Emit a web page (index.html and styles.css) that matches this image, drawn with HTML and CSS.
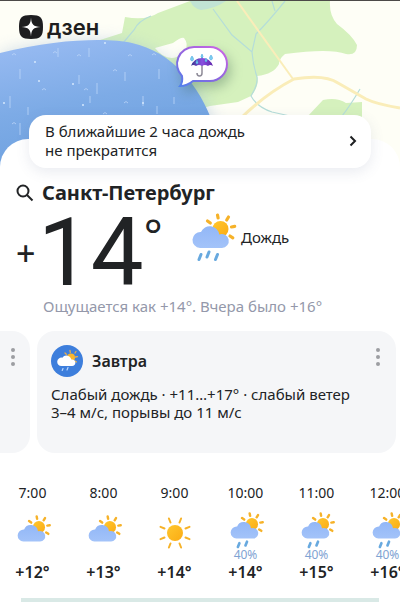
FILE: index.html
```html
<!DOCTYPE html>
<html lang="ru">
<head>
<meta charset="utf-8">
<meta name="viewport" content="width=device-width, initial-scale=1">
<title>Погода — Санкт-Петербург</title>
<link rel="stylesheet" href="styles.css">
</head>
<body>
<svg class="defs" aria-hidden="true">
  <defs>
    <linearGradient id="sunFill" x1="0" y1="0" x2="1" y2="1">
      <stop offset="0" stop-color="#ffc72e"/><stop offset="1" stop-color="#fbab13"/>
    </linearGradient>
    <linearGradient id="cloudFill" x1="0" y1="0" x2="0" y2="1">
      <stop offset="0" stop-color="#92b7f7"/><stop offset="1" stop-color="#a3c3f9"/>
    </linearGradient>
    <symbol id="sun-cloud" viewBox="0 0 46 50">
      <g stroke="#f6b229" stroke-width="3.200" stroke-linecap="round">
        <path d="M26.500 2l.6 3M37.500 4l-1.800 3M16.500 8l2.800 2M40.500 14l3.200-.6M39 23l2.800 1.800"/>
      </g>
      <circle cx="29.500" cy="16" r="8" fill="url(#sunFill)"/>
      <path d="M9 35a8 8 0 1 1 1-16a9.500 9.500 0 0 1 18.200 2.500a7 7 0 1 1 2.800 13.500z" fill="url(#cloudFill)"/>
    </symbol>
    <symbol id="rain-two" viewBox="0 0 46 50">
      <use href="#sun-cloud" width="46" height="50"/>
      <path d="M13 41l-2 5M23 39l-2 5" stroke="#68a9df" stroke-width="3.500" stroke-linecap="round"/>
    </symbol>
    <symbol id="rain-three" viewBox="0 0 46 50">
      <use href="#sun-cloud" width="46" height="50"/>
      <path d="M10 41.500l-2 5M18 39l-2 5M26.500 41.500l-2 5" stroke="#68a9df" stroke-width="3" stroke-linecap="round"/>
    </symbol>
    <symbol id="sun" viewBox="0 0 34 34">
      <circle cx="17" cy="17" r="8" fill="url(#sunFill)"/>
      <path d="M12.500 6.500l-1.600-4M21.500 6.500l1.600-4M27.500 12.500l4-1.600M27.500 21.500l4 1.600M21.500 27.500l1.600 4M12.500 27.500l-1.600 4M6.500 21.500l-4 1.600M6.500 12.500l-4-1.600" stroke="#f6b229" stroke-width="2" stroke-linecap="round"/>
    </symbol>
  </defs>
</svg>

<header class="hero">
  <svg class="map" viewBox="0 0 400 180" preserveAspectRatio="xMidYMin slice" aria-hidden="true">
    <defs>
      <linearGradient id="rainFill" x1="0" y1="0" x2=".3" y2="1">
        <stop offset="0" stop-color="#9abcf3"/><stop offset=".5" stop-color="#7dabe6"/><stop offset="1" stop-color="#6b9fde"/>
      </linearGradient>
      <filter id="soft" x="-20%" y="-20%" width="140%" height="140%"><feGaussianBlur stdDeviation="8"/></filter>
    </defs>
    <rect width="400" height="180" fill="#fefef6"/>
    <path d="M100 39L122 32L125 16Q146 20 158 12L190 0H330Q329 14 337 23Q352 34 357 44Q357 55 346 53Q330 47 285 53Q279 58 279 63Q274 73 257 75Q260 84 251 95L238 101L210 105Q190 110 180 120L100 110Z" fill="#d5f1bd"/>
    <path d="M155 47L173 42Q181 36 184 37Q189 43 185 50L177 56Q165 60 155 47Z" fill="#fefef6"/>
    <path d="M190 0H226Q214 8 201 9Q194 8 190 0Z" fill="#c1e3d4"/>
    <path d="M307 116L323 99Q337 96 346 102L362 101V116Z" fill="#d5f1bd"/>
    <g fill="none" stroke="#b5ddd9" stroke-width="1.200">
      <path d="M213 8L232 34L252 51L256 33Q268 21 285 0M272 0L275 10M252 51Q253 64 257 76Q258 84 251 95Q257 106 272 111L290 115M151 15Q138 20 134 29L123 42"/>
      <path d="M342 115Q350 105 360 88"/>
    </g>
    <g fill="none" stroke="#faedb9" stroke-linejoin="round">
      <path d="M237 0L293 78" stroke-width="2"/>
      <path d="M242 116Q267 92 294 78Q325 73 338 82L366 98Q376 103 400 107" stroke-width="3"/>
    </g>
    <path d="M0 52C70 34 127 36 150 50C184 64 205 93 214 125V180H0Z" fill="#9cb7d6" opacity=".45" filter="url(#soft)"/>
    <path d="M0 52C60 37 110 37 132 42C172 51 199 83 214 125V180H0Z" fill="url(#rainFill)"/>
    <path d="M20 68v10M58 47v9M79 74v9M97 82v11M125 71v9M159 68v10M10 95v12M28 106v8M90 95v7M143 95v10M174 96v7M20 122v12M89 47v9M157 105v8" stroke="#bcd6f8" stroke-width="1" opacity=".8"/>
    <path d="M12 54q2-3 4 0M53 52q2-3 4 0M77 55q2-3 4 0M113 70q2-3 4 0M128 55q2-3 4 0M42 89q2-3 4 0M84 89q2-3 4 0M124 102q2-3 4 0M103 113q2-3 4 0M152 54q2-3 4 0M12 123q2-3 4 0" fill="none" stroke="#bdd6f9" opacity=".8"/>
    <g fill="#d5e7fc"><circle cx="105" cy="42" r="1"/><circle cx="35" cy="61" r="1"/><circle cx="39" cy="80" r="1"/><circle cx="73" cy="83" r="1"/><circle cx="4" cy="102" r="1"/><circle cx="143" cy="102" r="1"/><circle cx="83" cy="104" r="1"/></g>
  </svg>

  <a class="brand" href="#" aria-label="Дзен">
    <svg class="brand-mark" viewBox="0 0 24 24" aria-hidden="true">
      <path d="M12 0C21.500 0 24 2.500 24 12S21.500 24 12 24S0 21.500 0 12S2.500 0 12 0Z" fill="#1e1e20"/>
      <path d="M12 2.500C12.400 9.500 14.500 11.600 21.500 12C14.500 12.400 12.400 14.500 12 21.500C11.600 14.500 9.500 12.400 2.500 12C9.500 11.600 11.600 9.500 12 2.500Z" fill="#fff"/>
    </svg>
    <span class="brand-name">дзен</span>
  </a>

  <button class="pin" aria-label="Осадки на карте">
    <svg viewBox="0 0 56 46" aria-hidden="true">
      <defs>
        <linearGradient id="pinEdge" x1="0" y1="1" x2=".8" y2="0">
          <stop offset="0" stop-color="#4f82ee"/><stop offset=".5" stop-color="#8b66df"/><stop offset="1" stop-color="#c565e4"/>
        </linearGradient>
        <linearGradient id="dome" x1="0" y1="0" x2="1" y2="0">
          <stop offset="0" stop-color="#37358d"/><stop offset=".5" stop-color="#8950e0"/><stop offset="1" stop-color="#6026ab"/>
        </linearGradient>
      </defs>
      <path d="M20 3H36A17 17 0 0 1 36 37H19Q13 42 6 42Q9 38 8 32A17 17 0 0 1 20 3Z" fill="#fff" stroke="url(#pinEdge)" stroke-width="2"/>
      <path d="M28 13V29Q28 32 25.500 32Q23 32 23 29" fill="none" stroke="#8e8b98" stroke-width="1.500"/>
      <path d="M17 22Q20 14 28 14Q36 14 39 22Q36 20 34 22Q31 20 28 22Q25 20 22 22Q19 20 17 22Z" fill="url(#dome)"/>
      <path d="M18 12q-3 4 0 5q3-1 0-5M28 10q-2 3 0 4q2-1 0-4M37 11q-3 4 0 5q3-1 0-5M23 16q-2 3 0 4q2-1 0-4M32 14q-2 3 0 4q2-1 0-4" fill="#7fd0f3" stroke="#4aa7dd" stroke-width=".6"/>
    </svg>
  </button>
</header>

<main class="sheet">
  <a class="nowcast" href="#">
    <span>В ближайшие 2 часа дождь<br>не прекратится</span>
    <svg class="chevron" viewBox="0 0 8 12" aria-hidden="true"><path d="M1.500 1.500L6 6L1.500 10.500" fill="none" stroke="#1e2022" stroke-width="2"/></svg>
  </a>

  <section class="current">
    <div class="place">
      <button class="search" aria-label="Поиск города">
        <svg viewBox="0 0 18 18" aria-hidden="true"><circle cx="7" cy="7" r="5.500" fill="none" stroke="#222426" stroke-width="2"/><path d="M11 11L16.500 16.500" stroke="#222426" stroke-width="2"/></svg>
      </button>
      <h1>Санкт-Петербург</h1>
    </div>
    <div class="reading">
      <p class="temperature"><span class="sign">+</span><span class="degrees">14</span><span class="unit">°</span></p>
      <svg class="current-icon" aria-hidden="true"><use href="#rain-three"/></svg>
      <span class="condition">Дождь</span>
    </div>
    <p class="feels">Ощущается как +14°. Вчера было +16°</p>
  </section>

  <section class="cards">
    <article class="card card-previous">
      <button class="more" aria-label="Ещё"><i></i><i></i><i></i></button>
    </article>
    <article class="card">
      <header class="card-head">
        <svg class="card-icon" viewBox="0 0 32 32" aria-hidden="true">
          <circle cx="16" cy="16" r="16" fill="#3d7edc"/>
          <path d="M19 5.500l.3 2M25 6.500l-1 1.500M14 8l1.300 1.300M24.500 12l2-.4M24 16l1.500 1" stroke="#e9b04d" stroke-width="1.300" stroke-linecap="round"/>
          <circle cx="20" cy="12.500" r="4" fill="#fbb62c"/>
          <path d="M10.500 21a4.200 4.200 0 1 1 .8-8.300a5 5 0 0 1 9 1.800a3.300 3.300 0 1 1 .7 6.500z" fill="#fff"/>
          <path d="M12 23.500l-.8 2M17 22.500l-1 2.500" stroke="#b9d8ff" stroke-width="1.200" stroke-linecap="round"/>
        </svg>
        <h2>Завтра</h2>
        <button class="more" aria-label="Ещё"><i></i><i></i><i></i></button>
      </header>
      <p>Слабый дождь · +11…+17° · слабый ветер<br>3–4 м/с, порывы до 11 м/с</p>
    </article>
  </section>

  <ol class="hours">
    <li><time>7:00</time><svg class="hour-icon dry" aria-hidden="true"><use href="#sun-cloud"/></svg><b>+12°</b></li>
    <li><time>8:00</time><svg class="hour-icon dry" aria-hidden="true"><use href="#sun-cloud"/></svg><b>+13°</b></li>
    <li><time>9:00</time><svg class="hour-icon clear" aria-hidden="true"><use href="#sun"/></svg><b>+14°</b></li>
    <li><time>10:00</time><svg class="hour-icon" aria-hidden="true"><use href="#rain-two"/></svg><small>40%</small><b>+14°</b></li>
    <li><time>11:00</time><svg class="hour-icon" aria-hidden="true"><use href="#rain-two"/></svg><small>40%</small><b>+15°</b></li>
    <li><time>12:00</time><svg class="hour-icon" aria-hidden="true"><use href="#rain-two"/></svg><small>40%</small><b>+16°</b></li>
  </ol>

  <div class="banner"></div>
</main>
</body>
</html>
```

FILE: styles.css
```css
* {
  box-sizing: border-box;
}

body {
  margin: 0;
  overflow-x: hidden;
  background: #fff;
  color: #212325;
  font: 15px/19px "Noto Sans", "Open Sans", sans-serif;
}

h1, h2, p, ol {
  margin: 0;
  padding: 0;
}

button {
  display: block;
  padding: 0;
  border: 0;
  background: none;
}

a {
  color: inherit;
  text-decoration: none;
}

svg {
  display: block;
  flex: none;
}

.defs {
  position: absolute;
  width: 0;
  height: 0;
}

.hero {
  position: relative;
  height: 139px;
  padding: 14px 19px;
  border-top: 1px solid #4c4a48;
}

.map {
  position: absolute;
  z-index: -1;
  top: 0;
  left: 0;
  width: 100%;
  height: 180px;
}

.brand {
  display: inline-flex;
  align-items: center;
  gap: 4px;
}

.brand-mark {
  width: 24px;
  height: 24px;
}

.brand-name {
  color: #1e1e20;
  font: 600 22px/24px Inter, "Noto Sans", sans-serif;
}

.pin {
  position: absolute;
  top: 43px;
  left: 174px;
  width: 56px;
  height: 46px;
  filter: drop-shadow(3px 6px 6px rgb(60 100 80 / 35%));
}

.sheet {
  border-radius: 28px 28px 0 0;
  background: #fff;
}

.nowcast {
  display: flex;
  align-items: center;
  justify-content: space-between;
  margin: 0 29px;
  padding: 7px 14px 8px 16px;
  border-radius: 17px;
  background: #fff;
  box-shadow: 0 4px 14px rgb(70 90 130 / 12%);
  transform: translateY(-24px);
}

.chevron {
  width: 8px;
  height: 12px;
}

.current {
  padding: 0 16px;
  margin-top: -13px;
}

.place {
  display: flex;
  align-items: center;
  gap: 8px;
}

.search svg {
  width: 18px;
  height: 18px;
}

h1 {
  font-size: 20px;
  font-weight: 700;
  line-height: 28px;
}

.reading {
  display: flex;
  height: 90px;
}

.temperature {
  display: flex;
  flex: none;
  width: 175px;
}

.sign {
  width: 22px;
  padding-top: 26px;
  font-size: 34px;
  font-weight: 500;
  line-height: 40px;
}

.degrees {
  font-family: Roboto, "Noto Sans", sans-serif;
  font-size: 94px;
  line-height: 92px;
}

.unit {
  font-size: 44px;
  line-height: 54px;
}

.current-icon {
  width: 46px;
  height: 50px;
  margin-top: 6px;
}

.condition {
  padding: 21px 0 0 4px;
}

.feels {
  padding-left: 27px;
  color: #9498aa;
}

.cards {
  display: grid;
  grid-template-columns: 30px 1fr;
  gap: 7px;
  margin: 15px 4px 0 0;
}

.card {
  min-height: 122px;
  padding: 14px;
  border-radius: 18px;
  background: #f5f6f8;
}

.card-previous {
  padding: 17px 15px;
  border-radius: 0 18px 18px 0;
}

.card-head {
  display: flex;
  align-items: center;
  gap: 9px;
  margin-bottom: 8px;
}

.card-icon {
  width: 32px;
  height: 32px;
}

h2 {
  flex: 1;
  font-size: 16px;
  font-weight: 600;
  line-height: 20px;
}

.card p {
  line-height: 18px;
}

.more {
  display: grid;
  gap: 3px;
  justify-items: end;
}

.card-previous .more {
  width: 0;
  justify-items: start;
  margin-left: -4px;
}

.card-head .more {
  align-self: flex-start;
  margin: 3px 2px 0 0;
}

.more i {
  width: 4px;
  height: 4px;
  border-radius: 50%;
  background: #9c9ea2;
}

.hours {
  display: grid;
  grid-template-columns: repeat(6, 71px);
  margin-top: 31px;
  list-style: none;
}

.hours li {
  display: grid;
  grid-template-rows: 18px 48px 10px 24px;
  justify-items: center;
  width: 65px;
}

.hours time {
  font-size: 14px;
  line-height: 18px;
}

.hour-icon {
  align-self: end;
  width: 36px;
  height: 38px;
  margin-left: 3px;
}

.hour-icon.dry {
  margin-bottom: -3px;
}

.hour-icon.clear {
  width: 34px;
  height: 34px;
  margin-left: 0;
}

.hours small {
  color: #7fa3d3;
  font-size: 12px;
  line-height: 10px;
}

.hours b {
  grid-row: 4;
  font-size: 16px;
  font-weight: 600;
  line-height: 24px;
}

.banner {
  height: 4px;
  margin: 14px 21px 0;
  background: #d9e9e6;
}
```
